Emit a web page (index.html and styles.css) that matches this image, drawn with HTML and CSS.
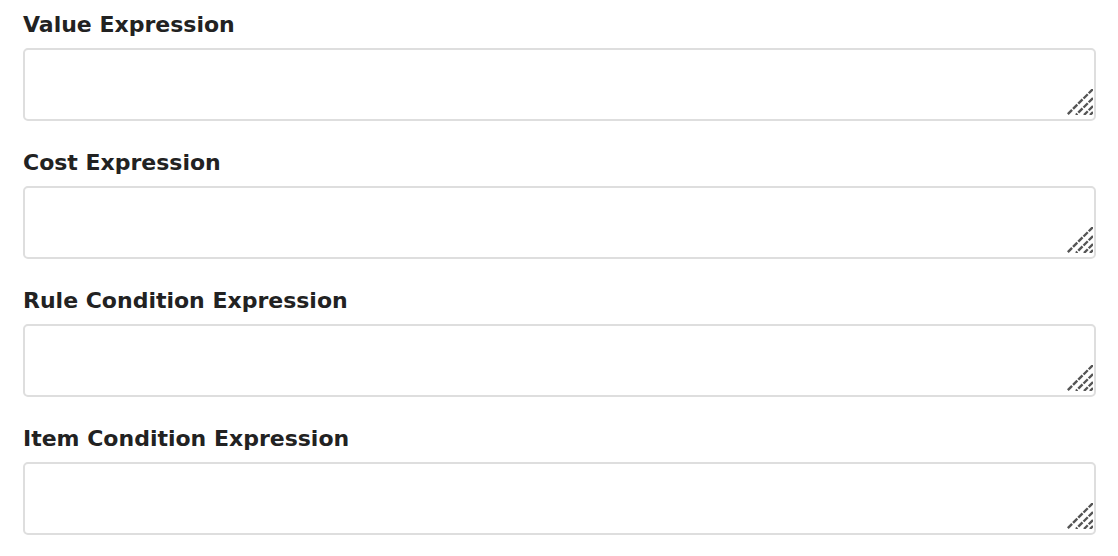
FILE: index.html
```html
<!DOCTYPE html>
<html lang="en">
<head>
    <meta charset="UTF-8">
    <meta name="viewport" content="width=device-width, initial-scale=1.0">
    <title>Expressions</title>
    <link rel="stylesheet" href="styles.css">
</head>
<body>
    <form class="expr-form">
        <div class="field">
            <label for="value-expr">Value Expression</label>
            <div class="box">
                <textarea id="value-expr" name="value-expr"></textarea>
                <svg class="grip" viewBox="0 0 26 26"><path d="M26 0 L0 26 M26 9 L9 26 M26 17 L17 26 M26 23 L23 26"/></svg>
            </div>
        </div>
        <div class="field">
            <label for="cost-expr">Cost Expression</label>
            <div class="box">
                <textarea id="cost-expr" name="cost-expr"></textarea>
                <svg class="grip" viewBox="0 0 26 26"><path d="M26 0 L0 26 M26 9 L9 26 M26 17 L17 26 M26 23 L23 26"/></svg>
            </div>
        </div>
        <div class="field">
            <label for="rule-expr">Rule Condition Expression</label>
            <div class="box">
                <textarea id="rule-expr" name="rule-expr"></textarea>
                <svg class="grip" viewBox="0 0 26 26"><path d="M26 0 L0 26 M26 9 L9 26 M26 17 L17 26 M26 23 L23 26"/></svg>
            </div>
        </div>
        <div class="field">
            <label for="item-expr">Item Condition Expression</label>
            <div class="box">
                <textarea id="item-expr" name="item-expr"></textarea>
                <svg class="grip" viewBox="0 0 26 26"><path d="M26 0 L0 26 M26 9 L9 26 M26 17 L17 26 M26 23 L23 26"/></svg>
            </div>
        </div>
    </form>
</body>
</html>
```

FILE: styles.css
```css
body {
    margin: 0;
    background-color: #fff;
    font-family: "DejaVu Sans", Verdana, sans-serif;
    color: #222;
}

.expr-form {
    padding: 12px 22px 0 23px;
}

.field {
    margin-bottom: 29px;
}

.field label {
    display: block;
    font-size: 22px;
    font-weight: bold;
    line-height: 26px;
    margin-bottom: 10px;
}

.box {
    position: relative;
}

.box textarea {
    display: block;
    box-sizing: border-box;
    width: 100%;
    height: 73px;
    margin: 0;
    border: 2px solid #dedede;
    border-radius: 5px;
    resize: none;
    font-family: inherit;
    font-size: 16px;
}

/* poignée de redimensionnement */
.grip {
    position: absolute;
    right: 3px;
    bottom: 6px;
    width: 26px;
    height: 26px;
    fill: none;
    stroke: #555;
    stroke-width: 2.4;
    stroke-dasharray: 6 1.4;
}
```
